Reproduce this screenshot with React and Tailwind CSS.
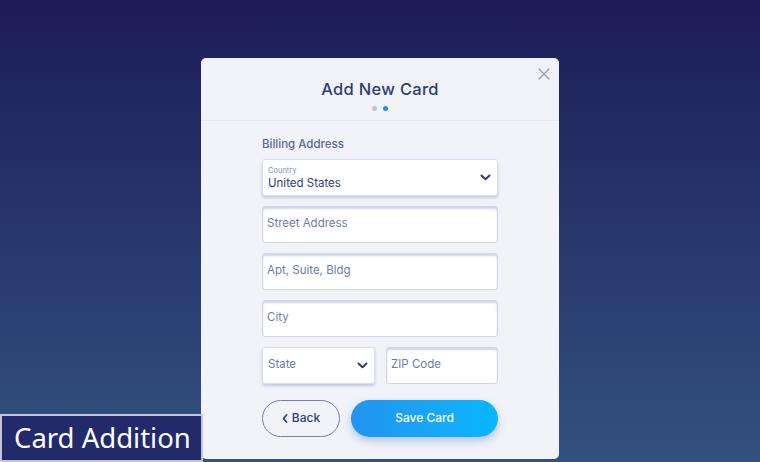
import React from 'react';

// 下拉選單的箭頭
const Chevron = () => (
  <svg width="11" height="7" viewBox="0 0 11 7" fill="none">
    <path d="M1.5 1.5 L5.5 5.2 L9.5 1.5" stroke="#2b3f7a" strokeWidth="2" strokeLinecap="round" strokeLinejoin="round" />
  </svg>
);

const TextField = ({ placeholder, className = '' }) => (
  <div
    className={`h-[37px] bg-white border border-[#cfd6ea] rounded-[3px] shadow-[inset_0_2px_2px_rgba(120,135,190,0.35)] flex items-center px-[4px] text-[11.5px] text-[#6a7cab] ${className}`}
  >
    {placeholder}
  </div>
);

const SelectField = ({ label, value, className = '' }) => (
  <div
    className={`h-[37px] bg-white border border-[#d9def0] rounded-[3px] shadow-[0_2px_3px_rgba(110,125,180,0.35)] flex items-center justify-between pl-[5px] pr-[6px] ${className}`}
  >
    {label ? (
      <div className="flex flex-col leading-none pt-[2px]">
        <span className="text-[7.5px] text-[#7f8fb6] mb-[3px]">{label}</span>
        <span className="text-[11.5px] text-[#2e4178]">{value}</span>
      </div>
    ) : (
      <span className="text-[11.5px] text-[#6a7cab]">{value}</span>
    )}
    <Chevron />
  </div>
);

export default function App() {
  return (
    <div
      className="relative w-[760px] h-[462px] overflow-hidden bg-gradient-to-b from-[#1d1c58] to-[#33517f]"
      style={{ fontFamily: 'Inter, "Noto Sans", sans-serif' }}
    >
      <div className="flex justify-center pt-[58px]">
        <div className="relative w-[358px] h-[401px] bg-[#f1f3f9] rounded-[5px]">
          {/* 關閉按鈕 */}
          <svg className="absolute right-[9px] top-[10px]" width="12" height="12" viewBox="0 0 12 12">
            <path d="M1 1 L11 11 M11 1 L1 11" stroke="#8e9ab8" strokeWidth="1.4" strokeLinecap="round" />
          </svg>

          <div className="h-[63px] border-b border-[#e1e8f6] flex flex-col items-center pt-[23px]">
            <h1 className="text-[16.5px] font-medium text-[#2c3f74] leading-none tracking-[0.3px]">Add New Card</h1>
            <div className="flex gap-[6px] mt-[8px]">
              <span className="w-[5px] h-[5px] rounded-full bg-[#bcc3d3]" />
              <span className="w-[5px] h-[5px] rounded-full bg-[#1e8ff0]" />
            </div>
          </div>

          <div className="px-[61px] pt-[18px]">
            <div className="text-[11.5px] font-medium text-[#56699a] leading-none mb-[8px]">Billing Address</div>
            <div className="flex flex-col gap-[10px]">
              <SelectField label="Country" value="United States" />
              <TextField placeholder="Street Address" />
              <TextField placeholder="Apt, Suite, Bldg" />
              <TextField placeholder="City" />
              <div className="flex gap-[11px]">
                <SelectField value="State" className="w-[113px]" />
                <TextField placeholder="ZIP Code" className="flex-1" />
              </div>
            </div>

            <div className="flex gap-[11px] mt-[16px]">
              <button className="w-[78px] h-[37px] rounded-full border border-[#7180b2] flex items-center justify-center gap-[4px] text-[12px] font-medium text-[#2e4178]">
                <svg width="6" height="9" viewBox="0 0 6 9">
                  <path d="M4.5 1 L1.5 4.5 L4.5 8" stroke="#2e4178" strokeWidth="1.8" fill="none" strokeLinecap="round" strokeLinejoin="round" />
                </svg>
                Back
              </button>
              <button className="flex-1 h-[37px] rounded-full bg-gradient-to-r from-[#2194ef] to-[#07b6ff] text-white text-[12px] font-medium shadow-[0_4px_8px_rgba(60,110,190,0.35)]">
                Save Card
              </button>
            </div>
          </div>
        </div>
      </div>

      {/* 左下角標籤 */}
      <div className="absolute left-0 bottom-0 w-[203px] h-[48px] bg-[#222a6b] border-2 border-[#c2c6d4] flex items-center pl-[12px]">
        <span className="text-white text-[27.5px] leading-none" style={{ fontFamily: '"Noto Sans", sans-serif' }}>Card Addition</span>
      </div>
    </div>
  );
}
